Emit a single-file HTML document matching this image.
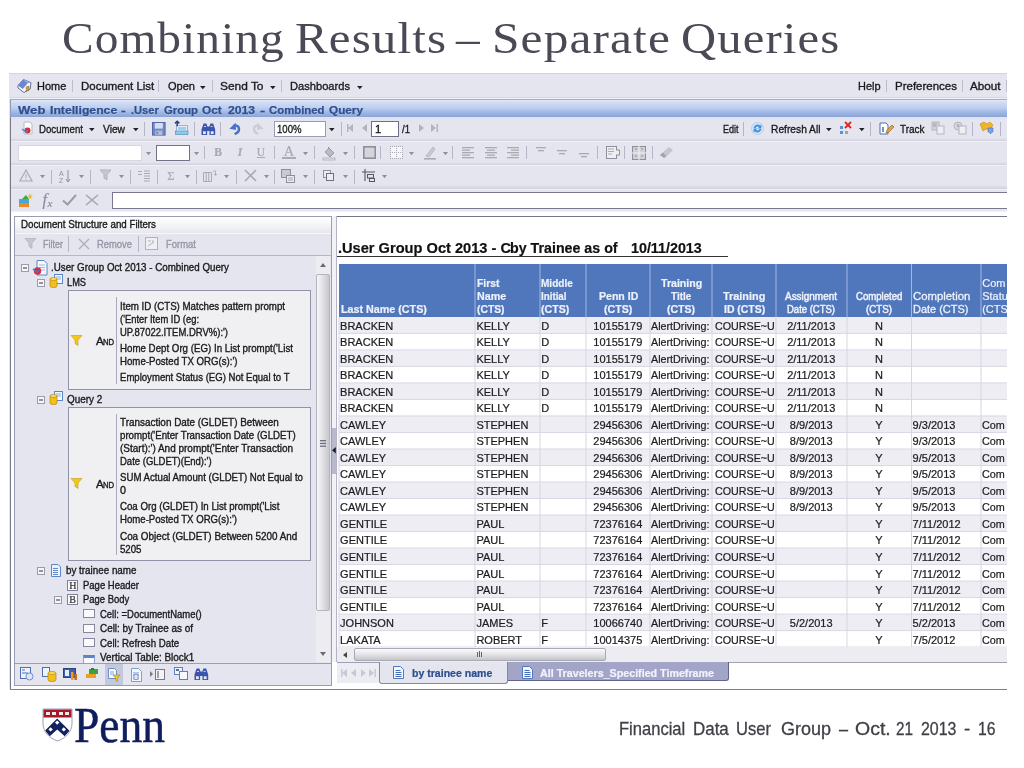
<!DOCTYPE html>
<html>
<head>
<meta charset="utf-8">
<title>Combining Results - Separate Queries</title>
<style>
*{box-sizing:border-box;margin:0;padding:0}
html,body{width:1024px;height:768px;overflow:hidden;background:#fff}
body{position:relative;font-family:"Liberation Sans",sans-serif}
.a{position:absolute}
.t{position:absolute;white-space:nowrap;line-height:normal;-webkit-text-stroke:.22px}
#slide{position:absolute;left:0;top:0;width:1024px;height:768px;overflow:hidden;will-change:transform}
svg{position:absolute;overflow:visible}
</style>
</head>
<body>
<div id="slide">
<span class="t" style="left:61.80px;top:13.10px;font-size:44px;color:#4a4a56;font-family:'Liberation Serif',serif;letter-spacing:1.0px;transform-origin:0 39.20px;transform:scale(1.0757,1);-webkit-text-stroke:0;">Combining</span>
<span class="t" style="left:295.20px;top:13.10px;font-size:44px;color:#4a4a56;font-family:'Liberation Serif',serif;letter-spacing:1.0px;transform-origin:0 39.20px;transform:scale(1.1136,1);-webkit-text-stroke:0;">Results</span>
<span class="t" style="left:456.40px;top:13.10px;font-size:44px;color:#4a4a56;font-family:'Liberation Serif',serif;letter-spacing:1.0px;transform-origin:0 39.20px;transform:scale(1.0783,1);-webkit-text-stroke:0;">–</span>
<span class="t" style="left:491.80px;top:13.10px;font-size:44px;color:#4a4a56;font-family:'Liberation Serif',serif;letter-spacing:1.0px;transform-origin:0 39.20px;transform:scale(1.1225,1);-webkit-text-stroke:0;">Separate</span>
<span class="t" style="left:681.20px;top:13.10px;font-size:44px;color:#4a4a56;font-family:'Liberation Serif',serif;letter-spacing:1.0px;transform-origin:0 39.20px;transform:scale(1.1068,1);-webkit-text-stroke:0;">Queries</span>
<div class="a" style="left:9px;top:73px;width:998px;height:616px;background:#e4e5ee;"></div>
<span class="t" style="left:618.75px;top:719.49px;font-size:17.8px;color:#3f3f46;transform-origin:0 16.11px;transform:scale(0.9308,1);-webkit-text-stroke:.3px;">Financial</span>
<span class="t" style="left:693.00px;top:719.49px;font-size:17.8px;color:#3f3f46;transform-origin:0 16.11px;transform:scale(0.9517,1);-webkit-text-stroke:.3px;">Data</span>
<span class="t" style="left:736.25px;top:719.49px;font-size:17.8px;color:#3f3f46;transform-origin:0 16.11px;transform:scale(0.9322,1);-webkit-text-stroke:.3px;">User</span>
<span class="t" style="left:781.20px;top:719.49px;font-size:17.8px;color:#3f3f46;transform-origin:0 16.11px;transform:scale(1.0117,1);-webkit-text-stroke:.3px;">Group</span>
<span class="t" style="left:838.75px;top:719.49px;font-size:17.8px;color:#3f3f46;transform-origin:0 16.11px;transform:scale(0.9150,1);-webkit-text-stroke:.3px;">–</span>
<span class="t" style="left:854.80px;top:719.49px;font-size:17.8px;color:#3f3f46;transform-origin:0 16.11px;transform:scale(1.0948,1);-webkit-text-stroke:.3px;">Oct.</span>
<span class="t" style="left:895.50px;top:719.49px;font-size:17.8px;color:#3f3f46;transform-origin:0 16.11px;transform:scale(0.8594,1);-webkit-text-stroke:.3px;">21</span>
<span class="t" style="left:920.50px;top:719.49px;font-size:17.8px;color:#3f3f46;transform-origin:0 16.11px;transform:scale(0.8973,1);-webkit-text-stroke:.3px;">2013</span>
<span class="t" style="left:964.25px;top:719.49px;font-size:17.8px;color:#3f3f46;transform-origin:0 16.11px;transform:scale(1.0554,1);-webkit-text-stroke:.3px;">-</span>
<span class="t" style="left:978.00px;top:719.49px;font-size:17.8px;color:#3f3f46;transform-origin:0 16.11px;transform:scale(0.8847,1);-webkit-text-stroke:.3px;">16</span>
<span class="t" style="left:74.00px;top:697.01px;font-size:49.6px;color:#0f1d5c;font-family:'Liberation Serif',serif;transform-origin:0 44.19px;transform:scale(0.9175,1);-webkit-text-stroke:.5px #0f1d5c;">Penn</span>
<svg class="a" style="left:42px;top:708px" width="31" height="34" viewBox="0 0 31 34">
<path d="M1 1h29v14c0 9-6 15-14.5 18C7 30 1 24 1 15z" fill="#fff" stroke="#9aa0b8" stroke-width="1"/>
<rect x="1.5" y="1.5" width="28" height="8" fill="#a5182a"/>
<path d="M4 4h4v3H4zM10 4h4v3h-4zM17 4h4v3h-4zM23 4h4v3h-4z" fill="#f3e9ea"/>
<clipPath id="shc"><path d="M1.5 1.5h28v13.5c0 8.7-5.8 14.5-14 17.4C7.3 29.5 1.5 23.7 1.5 15z"/></clipPath><path clip-path="url(#shc)" d="M15.2 10.5L27.5 22.8 22.7 28.3 15.2 21.4 7.7 28.3 2.9 22.8z" fill="#13215f"/>
<path d="M15.2 12.4l2.2 2.2-2.2 2.2-2.2-2.2zM8.6 19.2l2.2 2.2-2.2 2.2-2.2-2.2zM21.8 19.2l2.2 2.2-2.2 2.2-2.2-2.2z" fill="#fff"/>
</svg>
<div class="a" style="left:9px;top:73px;width:998px;height:1px;background:#d3d4dd;"></div>
<div class="a" style="left:9px;top:96.6px;width:998px;height:1.2px;background:#d9d9e2;"></div>
<div class="a" style="left:9px;top:97.8px;width:998px;height:1.5px;background:#f0f0f7;"></div>
<svg class="a" style="left:16.50px;top:77.80px" width="15" height="15" viewBox="0 0 15 15"><path d="M1 7.5L6.5 1.5l7.5 3.2-.8 6.3L7 14.5 1 10z" fill="#f7f7fb" stroke="#59638c" stroke-width=".9"/><path d="M1 7.5L6.5 1.5l4.2 3.8L5.8 11z" fill="#6a86d8"/><path d="M6.5 1.5l4.2 3.8 3.3-.6z" fill="#8ea4e6"/><path d="M9.2 9l2.8-1v4.2l-2.8 1.2z" fill="#c8a040" stroke="#7a6020" stroke-width=".5"/></svg>
<span class="t" style="left:36.75px;top:79.68px;font-size:11.4px;color:#1a1a1e;transform-origin:0 10.32px;transform:scale(0.9625,1);-webkit-text-stroke:.34px;">Home</span>
<span class="t" style="left:80.50px;top:79.68px;font-size:11.4px;color:#1a1a1e;transform-origin:0 10.32px;transform:scale(1.0060,1);-webkit-text-stroke:.34px;">Document List</span>
<span class="t" style="left:167.50px;top:79.68px;font-size:11.4px;color:#1a1a1e;transform-origin:0 10.32px;transform:scale(0.9686,1);-webkit-text-stroke:.34px;">Open</span>
<span class="t" style="left:220.00px;top:79.68px;font-size:11.4px;color:#1a1a1e;transform-origin:0 10.32px;transform:scale(1.0458,1);-webkit-text-stroke:.34px;">Send To</span>
<span class="t" style="left:290.00px;top:79.68px;font-size:11.4px;color:#1a1a1e;transform-origin:0 10.32px;transform:scale(0.9769,1);-webkit-text-stroke:.34px;">Dashboards</span>
<span class="t" style="left:858.00px;top:79.68px;font-size:11.4px;color:#1a1a1e;transform-origin:0 10.32px;transform:scale(0.9600,1);-webkit-text-stroke:.34px;">Help</span>
<span class="t" style="left:894.50px;top:79.68px;font-size:11.4px;color:#1a1a1e;transform-origin:0 10.32px;transform:scale(1.0094,1);-webkit-text-stroke:.34px;">Preferences</span>
<span class="t" style="left:970.00px;top:79.68px;font-size:11.4px;color:#1a1a1e;transform-origin:0 10.32px;transform:scale(1.0241,1);-webkit-text-stroke:.34px;">About</span>
<div class="a" style="left:72px;top:80px;width:1px;height:12px;background:#bdbecc;"></div>
<div class="a" style="left:158px;top:80px;width:1px;height:12px;background:#bdbecc;"></div>
<div class="a" style="left:212px;top:80px;width:1px;height:12px;background:#bdbecc;"></div>
<div class="a" style="left:281px;top:80px;width:1px;height:12px;background:#bdbecc;"></div>
<div class="a" style="left:886px;top:80px;width:1px;height:12px;background:#bdbecc;"></div>
<div class="a" style="left:962px;top:80px;width:1px;height:12px;background:#bdbecc;"></div>
<div class="a" style="left:1006px;top:80px;width:1px;height:12px;background:#bdbecc;"></div>
<svg class="a" style="left:200.20px;top:85.50px" width="5.6" height="3.2" viewBox="0 0 5.6 3.2"><path d="M0 0h5.6L2.8 3.2z" fill="#222"/></svg>
<svg class="a" style="left:269.70px;top:85.50px" width="5.6" height="3.2" viewBox="0 0 5.6 3.2"><path d="M0 0h5.6L2.8 3.2z" fill="#222"/></svg>
<svg class="a" style="left:356.70px;top:85.50px" width="5.6" height="3.2" viewBox="0 0 5.6 3.2"><path d="M0 0h5.6L2.8 3.2z" fill="#222"/></svg>
<div class="a" style="left:10px;top:99px;width:1px;height:19px;background:#8d97b8;"></div>
<div class="a" style="left:9.8px;top:118px;width:1.4px;height:572px;background:#777889;"></div>
<div class="a" style="left:10px;top:99.3px;width:997px;height:18.2px;border-top:1.6px solid #a9aabb;border-left:1px solid #8d97b8;background:linear-gradient(#e2e8f9 0%,#d2ddf5 12%,#bfcfef 45%,#99b3e3 78%,#8fa9db 94%,#8a9cc6 100%);"></div>
<div class="a" style="left:11px;top:117.5px;width:996px;height:1.1px;background:#dde2f2;"></div>
<span class="t" style="left:17.80px;top:102.70px;font-size:11.6px;color:#2f4f8f;font-weight:bold;transform-origin:0 10.50px;transform:scale(1.1292,1);-webkit-text-stroke:.25px;text-shadow:0 1px 0 rgba(255,255,255,.3);">Web</span>
<span class="t" style="left:49.60px;top:102.70px;font-size:11.6px;color:#2f4f8f;font-weight:bold;transform-origin:0 10.50px;transform:scale(1.0533,1);-webkit-text-stroke:.25px;text-shadow:0 1px 0 rgba(255,255,255,.3);">Intelligence</span>
<span class="t" style="left:121.30px;top:102.70px;font-size:11.6px;color:#2f4f8f;font-weight:bold;transform-origin:0 10.50px;transform:scale(1.2129,1);-webkit-text-stroke:.25px;text-shadow:0 1px 0 rgba(255,255,255,.3);">-</span>
<span class="t" style="left:130.60px;top:102.70px;font-size:11.6px;color:#2f4f8f;font-weight:bold;transform-origin:0 10.50px;transform:scale(0.9581,1);-webkit-text-stroke:.25px;text-shadow:0 1px 0 rgba(255,255,255,.3);">.User</span>
<span class="t" style="left:163.90px;top:102.70px;font-size:11.6px;color:#2f4f8f;font-weight:bold;transform-origin:0 10.50px;transform:scale(0.9775,1);-webkit-text-stroke:.25px;text-shadow:0 1px 0 rgba(255,255,255,.3);">Group</span>
<span class="t" style="left:202.10px;top:102.70px;font-size:11.6px;color:#2f4f8f;font-weight:bold;transform-origin:0 10.50px;transform:scale(1.0192,1);-webkit-text-stroke:.25px;text-shadow:0 1px 0 rgba(255,255,255,.3);">Oct</span>
<span class="t" style="left:227.50px;top:102.70px;font-size:11.6px;color:#2f4f8f;font-weight:bold;transform-origin:0 10.50px;transform:scale(1.0505,1);-webkit-text-stroke:.25px;text-shadow:0 1px 0 rgba(255,255,255,.3);">2013</span>
<span class="t" style="left:259.60px;top:102.70px;font-size:11.6px;color:#2f4f8f;font-weight:bold;transform-origin:0 10.50px;transform:scale(1.3419,1);-webkit-text-stroke:.25px;text-shadow:0 1px 0 rgba(255,255,255,.3);">-</span>
<span class="t" style="left:268.50px;top:102.70px;font-size:11.6px;color:#2f4f8f;font-weight:bold;transform-origin:0 10.50px;transform:scale(0.9791,1);-webkit-text-stroke:.25px;text-shadow:0 1px 0 rgba(255,255,255,.3);">Combined</span>
<span class="t" style="left:329.00px;top:102.70px;font-size:11.6px;color:#2f4f8f;font-weight:bold;transform-origin:0 10.50px;transform:scale(1.0145,1);-webkit-text-stroke:.25px;text-shadow:0 1px 0 rgba(255,255,255,.3);">Query</span>
<div class="a" style="left:11px;top:137.6px;width:996px;height:3.3px;background:linear-gradient(rgba(209,210,220,0),#d0d1db);"></div>
<div class="a" style="left:11px;top:141.0px;width:996px;height:1.3px;background:#f0f0f7;"></div>
<div class="a" style="left:11px;top:161.5px;width:996px;height:3.3px;background:linear-gradient(rgba(209,210,220,0),#d0d1db);"></div>
<div class="a" style="left:11px;top:164.9px;width:996px;height:1.3px;background:#f0f0f7;"></div>
<div class="a" style="left:11px;top:185.4px;width:996px;height:3.3px;background:linear-gradient(rgba(209,210,220,0),#d0d1db);"></div>
<div class="a" style="left:11px;top:188.8px;width:996px;height:1.3px;background:#f0f0f7;"></div>
<svg class="a" style="left:21.00px;top:120.90px" width="12" height="15" viewBox="0 0 12 15"><path d="M3 1h6l2 2v10H3z" fill="#fbfbfd" stroke="#b9b9c8"/><circle cx="6.5" cy="9.5" r="3" fill="#e32636"/><path d="M1 8l4 3 2-2" stroke="#3a8fd6" stroke-width="1.5" fill="none"/></svg>
<span class="t" style="left:39.00px;top:122.68px;font-size:11.4px;color:#1a1a1e;transform-origin:0 10.32px;transform:scale(0.8474,1);-webkit-text-stroke:.34px;">Document</span>
<svg class="a" style="left:88.70px;top:127.90px" width="5.6" height="3.2" viewBox="0 0 5.6 3.2"><path d="M0 0h5.6L2.8 3.2z" fill="#222"/></svg>
<span class="t" style="left:103.00px;top:122.68px;font-size:11.4px;color:#1a1a1e;transform-origin:0 10.32px;transform:scale(0.8985,1);-webkit-text-stroke:.34px;">View</span>
<svg class="a" style="left:132.70px;top:127.90px" width="5.6" height="3.2" viewBox="0 0 5.6 3.2"><path d="M0 0h5.6L2.8 3.2z" fill="#222"/></svg>
<div class="a" style="left:144px;top:122px;width:1px;height:14px;background:#b4b5c6;"></div>
<svg class="a" style="left:151.90px;top:121.60px" width="13.6" height="13.6" viewBox="0 0 13.6 13.6"><rect x=".5" y=".5" width="12.6" height="12.6" fill="#7289c4" stroke="#5068a8"/><rect x="2.8" y="1" width="8" height="5.6" fill="#d6dff1"/><rect x="3.3" y="8.6" width="7" height="4.4" fill="#b1bedb"/><rect x="4.3" y="9.6" width="2" height="2.6" fill="#7289c4"/></svg>
<svg class="a" style="left:174.00px;top:120.40px" width="15" height="16" viewBox="0 0 15 16"><rect x="2.5" y="5.5" width="11" height="8" fill="#e4eef9" stroke="#8aa6d0" stroke-width=".8"/><rect x="4" y="7" width="8" height="3" fill="#9fd0e6"/><rect x="1.5" y="11" width="12.5" height="3.6" fill="#8ccbe6" stroke="#5f8fc0" stroke-width=".7"/><path d="M3.2 1.2v5M1 3.4l2.2-2.2 2.2 2.2" stroke="#27408a" fill="none" stroke-width="1.5"/></svg>
<div class="a" style="left:194px;top:122px;width:1px;height:14px;background:#b4b5c6;"></div>
<svg class="a" style="left:200.70px;top:121.80px" width="14.6" height="13.2" viewBox="0 0 14.6 13.2"><path d="M.5 13V7.5L2.6 1.5h2.8l1 3h2l1-3h2.8l2 6V13H8.5V9h-2.4v4z" fill="#3b55ae"/><rect x="2" y="9.3" width="2.8" height="2.8" fill="#e6ebfb"/><rect x="9.8" y="9.3" width="2.8" height="2.8" fill="#e6ebfb"/><path d="M3 4.5h2M9.6 4.5h2" stroke="#c5cff0" stroke-width="1.2"/></svg>
<div class="a" style="left:220px;top:122px;width:1px;height:14px;background:#b4b5c6;"></div>
<svg class="a" style="left:229.00px;top:122.40px" width="12" height="12" viewBox="0 0 12 12"><path d="M6.5 11.6C11.5 9.5 11 2.8 5.5 3.6" fill="none" stroke="#4a72c8" stroke-width="2.5" stroke-linecap="round"/><path d="M.4 6.8L6.6 .8L7 8z" fill="#4a72c8"/></svg>
<svg class="a" style="left:251.50px;top:122.40px" width="12" height="12" viewBox="0 0 12 12"><path d="M5.5 11.6C.5 9.5 1 2.8 6.5 3.6" fill="none" stroke="#cbccd6" stroke-width="2.2" stroke-linecap="round"/><path d="M11.6 6.8L5.4 .8L5 8z" fill="#cbccd6"/></svg>
<div class="a" style="left:274px;top:121px;width:52px;height:16px;background:#fff;border:1px solid #9a9bb0;"></div>
<span class="t" style="left:276.50px;top:122.68px;font-size:11.4px;color:#1a1a1e;transform-origin:0 10.32px;transform:scale(0.8408,1);-webkit-text-stroke:.34px;">100%</span>
<svg class="a" style="left:329.20px;top:127.90px" width="5.6" height="3.2" viewBox="0 0 5.6 3.2"><path d="M0 0h5.6L2.8 3.2z" fill="#222"/></svg>
<div class="a" style="left:341px;top:122px;width:1px;height:14px;background:#b4b5c6;"></div>
<svg class="a" style="left:346.00px;top:123.40px" width="8" height="10" viewBox="0 0 8 10"><path d="M7 1v8L2 5zM1 1h1.5v8H1z" fill="#b3b4c0"/></svg>
<svg class="a" style="left:361.00px;top:123.40px" width="8" height="10" viewBox="0 0 8 10"><path d="M6 1v8L1 5z" fill="#b3b4c0"/></svg>
<div class="a" style="left:371px;top:121px;width:27.5px;height:16px;background:#fff;border:1px solid #6f7088;"></div>
<span class="t" style="left:375.00px;top:122.68px;font-size:11.4px;color:#1a1a1e;-webkit-text-stroke:.34px;">1</span>
<span class="t" style="left:402.00px;top:122.68px;font-size:11.4px;color:#1a1a1e;transform-origin:0 10.32px;transform:scale(0.8421,1);-webkit-text-stroke:.34px;">/1</span>
<svg class="a" style="left:417.00px;top:123.40px" width="8" height="10" viewBox="0 0 8 10"><path d="M2 1v8l5-4z" fill="#b3b4c0"/></svg>
<svg class="a" style="left:430.00px;top:123.40px" width="8" height="10" viewBox="0 0 8 10"><path d="M1 1v8l5-4zM6.5 1H8v8H6.5z" fill="#b3b4c0"/></svg>
<span class="t" style="left:722.50px;top:122.68px;font-size:11.4px;color:#1a1a1e;transform-origin:0 10.32px;transform:scale(0.7892,1);-webkit-text-stroke:.34px;">Edit</span>
<div class="a" style="left:743px;top:122px;width:1px;height:14px;background:#b4b5c6;"></div>
<svg class="a" style="left:751.00px;top:121.90px" width="13" height="13" viewBox="0 0 13 13"><circle cx="6.5" cy="6.5" r="6" fill="#d3e6f8" stroke="#a8caee" stroke-width=".8"/><path d="M2.6 6a4 4 0 0 1 6.6-2.4l1.2-1v3.8H6.6l1.4-1.4A2.4 2.4 0 0 0 4.4 6z" fill="#4a90d9"/><path d="M10.4 7a4 4 0 0 1-6.6 2.4l-1.2 1V6.6h3.8L5 8A2.4 2.4 0 0 0 8.6 7z" fill="#4a90d9"/></svg>
<span class="t" style="left:771.00px;top:122.68px;font-size:11.4px;color:#1a1a1e;transform-origin:0 10.32px;transform:scale(0.8985,1);-webkit-text-stroke:.34px;">Refresh All</span>
<svg class="a" style="left:825.70px;top:127.90px" width="5.6" height="3.2" viewBox="0 0 5.6 3.2"><path d="M0 0h5.6L2.8 3.2z" fill="#222"/></svg>
<svg class="a" style="left:839.00px;top:121.40px" width="14" height="14" viewBox="0 0 14 14"><rect x="1" y="5" width="3" height="3" fill="#5b8fd8"/><rect x="1" y="10" width="3" height="3" fill="#5b8fd8"/><rect x="6" y="10" width="3" height="3" fill="#7fb5a8"/><path d="M6 1l6 6M12 1L6 7" stroke="#e02424" stroke-width="1.8"/></svg>
<svg class="a" style="left:859.20px;top:127.90px" width="5.6" height="3.2" viewBox="0 0 5.6 3.2"><path d="M0 0h5.6L2.8 3.2z" fill="#222"/></svg>
<div class="a" style="left:870px;top:122px;width:1px;height:14px;background:#b4b5c6;"></div>
<svg class="a" style="left:879.00px;top:121.40px" width="15" height="14" viewBox="0 0 15 14"><path d="M1 2h6l2 2v9H1z" fill="#fff" stroke="#4d6fb8"/><path d="M4 6v5" stroke="#4d6fb8" stroke-width="1.5"/><path d="M7 12l1-3 5-5 2 2-5 5z" fill="#e0a33a" stroke="#8a5a20" stroke-width=".6"/></svg>
<span class="t" style="left:899.50px;top:122.68px;font-size:11.4px;color:#1a1a1e;transform-origin:0 10.32px;transform:scale(0.8731,1);-webkit-text-stroke:.34px;">Track</span>
<svg class="a" style="left:931.00px;top:121.40px" width="14" height="14" viewBox="0 0 14 14"><rect x="1" y="1" width="7" height="8" fill="#d2d3db" stroke="#b4b5c0"/><rect x="6" y="5" width="7" height="8" fill="#eeeef3" stroke="#b4b5c0"/><path d="M2 3h4M2 5h3" stroke="#9d9eaa"/></svg>
<svg class="a" style="left:953.00px;top:121.40px" width="14" height="14" viewBox="0 0 14 14"><circle cx="5" cy="5" r="4" fill="#d5d6de" stroke="#b4b5c0"/><rect x="6" y="5" width="7" height="8" fill="#eeeef3" stroke="#b4b5c0"/><path d="M5 3v3" stroke="#8f909c"/></svg>
<div class="a" style="left:972px;top:122px;width:1px;height:14px;background:#b4b5c6;"></div>
<svg class="a" style="left:979.00px;top:121.40px" width="15" height="14" viewBox="0 0 15 14"><path d="M1 3l4-2 3 2 3-2 3 3-3 5-4-1-3 2z" fill="#f0b429" stroke="#c48a12" stroke-width=".6"/><path d="M9 7h5v4h-2v2l-2-2H9z" fill="#7ea4e6" stroke="#4d6fb8" stroke-width=".6"/></svg>
<div class="a" style="left:1000px;top:122px;width:1px;height:14px;background:#b4b5c6;"></div>
<div class="a" style="left:17.5px;top:144.5px;width:124.5px;height:16px;background:#fff;border:1px solid #d6d7e2;"></div>
<svg class="a" style="left:145.50px;top:152.00px" width="5" height="3.2" viewBox="0 0 5 3.2"><path d="M0 0h5L2.5 3.2z" fill="#8e8f9a"/></svg>
<div class="a" style="left:156px;top:144.5px;width:33.5px;height:16px;background:#fff;border:1px solid #70718a;"></div>
<svg class="a" style="left:193.50px;top:152.00px" width="5" height="3.2" viewBox="0 0 5 3.2"><path d="M0 0h5L2.5 3.2z" fill="#8e8f9a"/></svg>
<div class="a" style="left:204px;top:145.5px;width:1px;height:13.5px;background:#b4b5c6;"></div>
<div class="a" style="left:274px;top:145.5px;width:1px;height:13.5px;background:#b4b5c6;"></div>
<div class="a" style="left:314px;top:145.5px;width:1px;height:13.5px;background:#b4b5c6;"></div>
<div class="a" style="left:354px;top:145.5px;width:1px;height:13.5px;background:#b4b5c6;"></div>
<div class="a" style="left:380px;top:145.5px;width:1px;height:13.5px;background:#b4b5c6;"></div>
<div class="a" style="left:452px;top:145.5px;width:1px;height:13.5px;background:#b4b5c6;"></div>
<div class="a" style="left:526px;top:145.5px;width:1px;height:13.5px;background:#b4b5c6;"></div>
<div class="a" style="left:597px;top:145.5px;width:1px;height:13.5px;background:#b4b5c6;"></div>
<div class="a" style="left:624px;top:145.5px;width:1px;height:13.5px;background:#b4b5c6;"></div>
<div class="a" style="left:652px;top:145.5px;width:1px;height:13.5px;background:#b4b5c6;"></div>
<span class="t" style="left:212px;width:12px;text-align:center;top:145.95px;font-family:'Liberation Serif',serif;font-size:11.5px;color:#a9aab4;font-weight:bold;">B</span>
<span class="t" style="left:234px;width:12px;text-align:center;top:145.95px;font-family:'Liberation Serif',serif;font-size:11.5px;color:#a9aab4;font-style:italic;font-weight:bold;">I</span>
<span class="t" style="left:255px;width:12px;text-align:center;top:145.95px;font-family:'Liberation Serif',serif;font-size:11.5px;color:#a9aab4;text-decoration:underline;">U</span>
<span class="t" style="left:283px;width:12px;text-align:center;top:142.88px;font-family:'Liberation Serif',serif;font-size:14.5px;color:#a9aab4;">A</span>
<div class="a" style="left:282px;top:156.6px;width:14px;height:2.4px;border:1px solid #a9aab4;"></div>
<svg class="a" style="left:302.50px;top:152.00px" width="5" height="3.2" viewBox="0 0 5 3.2"><path d="M0 0h5L2.5 3.2z" fill="#8e8f9a"/></svg>
<svg class="a" style="left:321.50px;top:145.50px" width="14" height="14" viewBox="0 0 14 14"><path d="M3 6l4-4 5 5-4 4z" fill="#b9bac4" stroke="#8e8f9a" stroke-width=".8"/><path d="M6 1l3 3" stroke="#8e8f9a"/><rect x="1" y="12" width="12" height="2" fill="none" stroke="#a9aab4" stroke-width=".8"/></svg>
<svg class="a" style="left:342.50px;top:152.00px" width="5" height="3.2" viewBox="0 0 5 3.2"><path d="M0 0h5L2.5 3.2z" fill="#8e8f9a"/></svg>
<svg class="a" style="left:362.50px;top:146.00px" width="13" height="13" viewBox="0 0 13 13"><rect x="0.8" y="0.8" width="11.4" height="11.4" fill="#d4d5dc" stroke="#8e8f9a" stroke-width="1.6"/></svg>
<svg class="a" style="left:389.50px;top:146.00px" width="13" height="13" viewBox="0 0 13 13"><rect x="1" y="1" width="11" height="11" fill="#f6f6fa"/><path d="M0 .5h13M0 6.5h13M0 12.5h13M.5 0v13M6.5 0v13M12.5 0v13" stroke="#a9aab4" stroke-dasharray="1 1"/></svg>
<svg class="a" style="left:408.50px;top:152.00px" width="5" height="3.2" viewBox="0 0 5 3.2"><path d="M0 0h5L2.5 3.2z" fill="#8e8f9a"/></svg>
<svg class="a" style="left:423.00px;top:145.50px" width="14" height="14" viewBox="0 0 14 14"><path d="M3 10l7-9 2 2-6 8z" fill="#c9cad2" stroke="#a9aab4" stroke-width=".7"/><rect x="1" y="12" width="12" height="1.6" fill="#a9aab4"/></svg>
<svg class="a" style="left:442.50px;top:152.00px" width="5" height="3.2" viewBox="0 0 5 3.2"><path d="M0 0h5L2.5 3.2z" fill="#8e8f9a"/></svg>
<svg class="a" style="left:462.00px;top:146.90px" width="12" height="12.5" viewBox="0 0 12 12.5"><rect x="0" y="0.0" width="12" height="1.3" fill="#a9aab4"/><rect x="0" y="2.5" width="8" height="1.3" fill="#a9aab4"/><rect x="0" y="5.0" width="12" height="1.3" fill="#a9aab4"/><rect x="0" y="7.5" width="8" height="1.3" fill="#a9aab4"/><rect x="0" y="10.0" width="12" height="1.3" fill="#a9aab4"/></svg>
<svg class="a" style="left:484.60px;top:146.90px" width="12" height="12.5" viewBox="0 0 12 12.5"><rect x="0.0" y="0.0" width="12" height="1.3" fill="#a9aab4"/><rect x="2.0" y="2.5" width="8" height="1.3" fill="#a9aab4"/><rect x="0.0" y="5.0" width="12" height="1.3" fill="#a9aab4"/><rect x="2.0" y="7.5" width="8" height="1.3" fill="#a9aab4"/><rect x="0.0" y="10.0" width="12" height="1.3" fill="#a9aab4"/></svg>
<svg class="a" style="left:507.00px;top:146.90px" width="12" height="12.5" viewBox="0 0 12 12.5"><rect x="0" y="0.0" width="12" height="1.3" fill="#a9aab4"/><rect x="4" y="2.5" width="8" height="1.3" fill="#a9aab4"/><rect x="0" y="5.0" width="12" height="1.3" fill="#a9aab4"/><rect x="4" y="7.5" width="8" height="1.3" fill="#a9aab4"/><rect x="0" y="10.0" width="12" height="1.3" fill="#a9aab4"/></svg>
<svg class="a" style="left:535.70px;top:147.40px" width="10" height="6" viewBox="0 0 10 6"><rect x="0.0" y="0" width="10" height="1.3" fill="#a9aab4"/><rect x="2.0" y="3" width="6" height="1.3" fill="#a9aab4"/></svg>
<svg class="a" style="left:557.40px;top:150.40px" width="10" height="6" viewBox="0 0 10 6"><rect x="0.0" y="0" width="10" height="1.3" fill="#a9aab4"/><rect x="2.0" y="3" width="6" height="1.3" fill="#a9aab4"/></svg>
<svg class="a" style="left:579.00px;top:153.40px" width="10" height="6" viewBox="0 0 10 6"><rect x="0.0" y="0" width="10" height="1.3" fill="#a9aab4"/><rect x="2.0" y="3" width="6" height="1.3" fill="#a9aab4"/></svg>
<svg class="a" style="left:605.50px;top:146.00px" width="14" height="13" viewBox="0 0 14 13"><rect x=".5" y=".5" width="10" height="12" fill="#eeeef3" stroke="#8e8f9a"/><path d="M2 3h6M2 5.5h6M2 8h4" stroke="#a9aab4"/><path d="M10 4h3.5v5H10" fill="#eeeef3" stroke="#8e8f9a"/></svg>
<svg class="a" style="left:632.00px;top:145.50px" width="14" height="14" viewBox="0 0 14 14"><rect x=".5" y=".5" width="13" height="13" fill="#cfd0d8" stroke="#8e8f9a"/><path d="M7 0v14M0 7h14" stroke="#f1f1f5"/><path d="M3 3h2M9 3h2M3 10h2M9 10h2" stroke="#8e8f9a"/></svg>
<svg class="a" style="left:659.00px;top:146.00px" width="15" height="13" viewBox="0 0 15 13"><path d="M1 9l9-8 4 3-8 8z" fill="#c4c5ce"/><path d="M1 9l3-2.5 3 3.5-2 2z" fill="#a2a3ae"/></svg>
<div class="a" style="left:51px;top:169.8px;width:1px;height:14.199999999999989px;background:#b4b5c6;"></div>
<div class="a" style="left:90px;top:169.8px;width:1px;height:14.199999999999989px;background:#b4b5c6;"></div>
<div class="a" style="left:130px;top:169.8px;width:1px;height:14.199999999999989px;background:#b4b5c6;"></div>
<div class="a" style="left:157px;top:169.8px;width:1px;height:14.199999999999989px;background:#b4b5c6;"></div>
<div class="a" style="left:196px;top:169.8px;width:1px;height:14.199999999999989px;background:#b4b5c6;"></div>
<div class="a" style="left:236px;top:169.8px;width:1px;height:14.199999999999989px;background:#b4b5c6;"></div>
<div class="a" style="left:274px;top:169.8px;width:1px;height:14.199999999999989px;background:#b4b5c6;"></div>
<div class="a" style="left:314px;top:169.8px;width:1px;height:14.199999999999989px;background:#b4b5c6;"></div>
<div class="a" style="left:354px;top:169.8px;width:1px;height:14.199999999999989px;background:#b4b5c6;"></div>
<svg class="a" style="left:40.00px;top:175.30px" width="5" height="3.2" viewBox="0 0 5 3.2"><path d="M0 0h5L2.5 3.2z" fill="#8e8f9a"/></svg>
<svg class="a" style="left:79.00px;top:175.30px" width="5" height="3.2" viewBox="0 0 5 3.2"><path d="M0 0h5L2.5 3.2z" fill="#8e8f9a"/></svg>
<svg class="a" style="left:118.50px;top:175.30px" width="5" height="3.2" viewBox="0 0 5 3.2"><path d="M0 0h5L2.5 3.2z" fill="#8e8f9a"/></svg>
<svg class="a" style="left:185.00px;top:175.30px" width="5" height="3.2" viewBox="0 0 5 3.2"><path d="M0 0h5L2.5 3.2z" fill="#8e8f9a"/></svg>
<svg class="a" style="left:224.00px;top:175.30px" width="5" height="3.2" viewBox="0 0 5 3.2"><path d="M0 0h5L2.5 3.2z" fill="#8e8f9a"/></svg>
<svg class="a" style="left:263.50px;top:175.30px" width="5" height="3.2" viewBox="0 0 5 3.2"><path d="M0 0h5L2.5 3.2z" fill="#8e8f9a"/></svg>
<svg class="a" style="left:302.50px;top:175.30px" width="5" height="3.2" viewBox="0 0 5 3.2"><path d="M0 0h5L2.5 3.2z" fill="#8e8f9a"/></svg>
<svg class="a" style="left:342.50px;top:175.30px" width="5" height="3.2" viewBox="0 0 5 3.2"><path d="M0 0h5L2.5 3.2z" fill="#8e8f9a"/></svg>
<svg class="a" style="left:381.50px;top:175.30px" width="5" height="3.2" viewBox="0 0 5 3.2"><path d="M0 0h5L2.5 3.2z" fill="#8e8f9a"/></svg>
<svg class="a" style="left:18.50px;top:169.30px" width="14" height="13" viewBox="0 0 14 13"><path d="M7 1l6 11H1z" fill="none" stroke="#a9aab4" stroke-width="1.2"/><path d="M7 5v4M7 10v1" stroke="#a9aab4"/></svg>
<svg class="a" style="left:59.00px;top:168.80px" width="12" height="15" viewBox="0 0 12 15"><text x="0" y="6.5" font-size="7" font-family="Liberation Sans" fill="#8e8f9a">A</text><text x="0" y="14" font-size="7" font-family="Liberation Sans" fill="#8e8f9a">Z</text><path d="M9 1v12M7 10l2 3 2-3" stroke="#8e8f9a" fill="none"/></svg>
<svg class="a" style="left:99.50px;top:170.30px" width="11" height="11" viewBox="0 0 11 11"><path d="M0 0h11L7 4.5V10L4 8V4.5z" fill="#c6c7cf" stroke="#a9aab4" stroke-width=".8"/></svg>
<svg class="a" style="left:138.00px;top:170.00px" width="12" height="12" viewBox="0 0 12 12"><path d="M0 1.5h4M0 4.5h4" stroke="#a9aab4" stroke-width="1.2"/><path d="M6 1h6M6 3.5h6M6 6h6M6 8.5h6M6 11h6" stroke="#a9aab4" stroke-width="1.2"/></svg>
<span class="t" style="left:165px;width:12px;text-align:center;top:169.16px;font-family:'Liberation Serif',serif;font-size:12.5px;color:#a9aab4;">Σ</span>
<svg class="a" style="left:203.00px;top:170.00px" width="13" height="12" viewBox="0 0 13 12"><path d="M.5 2.5h8v9h-8zM3.2 2.5v9M5.8 2.5v9" fill="none" stroke="#a9aab4"/><path d="M10 1h2.5v4M11 4l1.5 1.5L14 4" fill="none" stroke="#a9aab4" stroke-width=".9"/></svg>
<svg class="a" style="left:243.50px;top:169.20px" width="13" height="13" viewBox="0 0 13 13"><path d="M1 1l11 11M12 1L1 12" stroke="#a9aab4" stroke-width="1.7"/></svg>
<svg class="a" style="left:281.00px;top:169.20px" width="14" height="14" viewBox="0 0 14 14"><rect x=".5" y=".5" width="9" height="8" fill="#c8c9d1" stroke="#8e8f9a"/><rect x="5.5" y="6.5" width="8" height="7" fill="#e9e9ee" stroke="#8e8f9a"/><path d="M7 9h5M7 11h5" stroke="#a9aab4"/></svg>
<svg class="a" style="left:323.00px;top:170.20px" width="12" height="12" viewBox="0 0 12 12"><rect x=".5" y=".5" width="7" height="7" fill="#ececf1" stroke="#8e8f9a"/><rect x="3.5" y="3.5" width="7" height="7" fill="#ececf1" stroke="#6f7080"/></svg>
<svg class="a" style="left:362.00px;top:168.80px" width="14" height="14" viewBox="0 0 14 14"><path d="M0 3h13M3 0v12" stroke="#55566a" stroke-width="1.1"/><rect x="5.5" y="5.5" width="6" height="3.5" fill="none" stroke="#55566a"/><rect x="7.5" y="9.5" width="5" height="3" fill="none" stroke="#55566a"/></svg>
<svg class="a" style="left:19.00px;top:192.50px" width="14" height="15" viewBox="0 0 14 15"><rect x="0" y="10" width="10" height="4" fill="#f08a24"/><rect x="0" y="6" width="10" height="4" fill="#4aa7dc"/><path d="M3 6l4-4 3 4z" fill="#3fa845"/><path d="M10 0l1 2 2-1-1 2 2 1-2 .5.5 2-1.5-1.5L10 6V4L8 3l2-.5z" fill="#f2c21a"/></svg>
<span class="t" style="left:42.50px;top:191.24px;font-size:16px;color:#8d8e9a;font-family:'Liberation Serif',serif;font-style:italic;">f</span>
<span class="t" style="left:47.50px;top:196.70px;font-size:11px;color:#8d8e9a;font-family:'Liberation Serif',serif;font-style:italic;">x</span>
<svg class="a" style="left:62.00px;top:194.00px" width="15" height="12" viewBox="0 0 15 12"><path d="M1 6.5l4.5 4L14 1" fill="none" stroke="#9b9ca8" stroke-width="2"/></svg>
<svg class="a" style="left:85.00px;top:194.00px" width="14" height="12" viewBox="0 0 14 12"><path d="M1 1l12 10M13 1L1 11" stroke="#a4a5b0" stroke-width="1.6"/></svg>
<div class="a" style="left:112px;top:191.8px;width:895px;height:17.2px;background:#fff;border:1px solid #787990;border-right:none;"></div>
<div class="a" style="left:11px;top:211.2px;width:996px;height:1px;background:#f1f1f6;"></div>
<div class="a" style="left:11px;top:212.2px;width:996px;height:476.8px;background:#ffffff;"></div>
<div class="a" style="left:10px;top:689px;width:997px;height:1px;background:#7d7e8c;"></div>
<div class="a" style="left:331.5px;top:216px;width:4.5px;height:446px;background:#f1f1f6;"></div>
<div class="a" style="left:332px;top:428px;width:4px;height:45.5px;background:#b9b9cc;"></div>
<svg class="a" style="left:332.00px;top:446.80px" width="3.8" height="6.4" viewBox="0 0 3.8 6.4"><path d="M3.8 0v6.4L0 3.2z" fill="#1c1c22"/></svg>
<div class="a" style="left:336px;top:216px;width:671px;height:1px;background:#75768a;"></div>
<div class="a" style="left:336px;top:216px;width:1px;height:446px;background:#b3b4c6;"></div>
<span class="t" style="left:337.60px;top:238.94px;font-size:15.2px;color:#111;font-weight:bold;transform-origin:0 13.76px;transform:scale(0.9623,1);">.User Group Oct 2013 - C</span>
<span class="t" style="left:509.80px;top:238.94px;font-size:15.2px;color:#111;font-weight:bold;transform-origin:0 13.76px;transform:scale(0.9373,1);">by Trainee as of</span>
<span class="t" style="left:631.25px;top:238.94px;font-size:15.2px;color:#111;font-weight:bold;transform-origin:0 13.76px;transform:scale(0.9410,1);">10/11/2013</span>
<div class="a" style="left:337px;top:256.2px;width:390.5px;height:1.1px;background:#333;"></div>
<svg class="a" style="left:339.00px;top:263.80px" width="668" height="383.2" viewBox="0 0 668 383.2"><rect x="0" y="0" width="668" height="53.00" fill="#5077bc"/><rect x="0" y="53.00" width="668" height="16.56" fill="#ededf3"/><rect x="0" y="69.51" width="668" height="16.56" fill="#ffffff"/><rect x="0" y="86.02" width="668" height="16.56" fill="#ededf3"/><rect x="0" y="102.53" width="668" height="16.56" fill="#ffffff"/><rect x="0" y="119.04" width="668" height="16.56" fill="#ededf3"/><rect x="0" y="135.55" width="668" height="16.56" fill="#ffffff"/><rect x="0" y="152.06" width="668" height="16.56" fill="#ededf3"/><rect x="0" y="168.57" width="668" height="16.56" fill="#ffffff"/><rect x="0" y="185.08" width="668" height="16.56" fill="#ededf3"/><rect x="0" y="201.59" width="668" height="16.56" fill="#ffffff"/><rect x="0" y="218.10" width="668" height="16.56" fill="#ededf3"/><rect x="0" y="234.61" width="668" height="16.56" fill="#ffffff"/><rect x="0" y="251.12" width="668" height="16.56" fill="#ededf3"/><rect x="0" y="267.63" width="668" height="16.56" fill="#ffffff"/><rect x="0" y="284.14" width="668" height="16.56" fill="#ededf3"/><rect x="0" y="300.65" width="668" height="16.56" fill="#ffffff"/><rect x="0" y="317.16" width="668" height="16.56" fill="#ededf3"/><rect x="0" y="333.67" width="668" height="16.56" fill="#ffffff"/><rect x="0" y="350.18" width="668" height="16.56" fill="#ededf3"/><rect x="0" y="366.69" width="668" height="16.56" fill="#ffffff"/><rect x="0" y="68.91" width="668" height="1" fill="#d7d8e5"/><rect x="0" y="85.42" width="668" height="1" fill="#d7d8e5"/><rect x="0" y="101.93" width="668" height="1" fill="#d7d8e5"/><rect x="0" y="118.44" width="668" height="1" fill="#d7d8e5"/><rect x="0" y="134.95" width="668" height="1" fill="#d7d8e5"/><rect x="0" y="151.46" width="668" height="1" fill="#d7d8e5"/><rect x="0" y="167.97" width="668" height="1" fill="#d7d8e5"/><rect x="0" y="184.48" width="668" height="1" fill="#d7d8e5"/><rect x="0" y="200.99" width="668" height="1" fill="#d7d8e5"/><rect x="0" y="217.50" width="668" height="1" fill="#d7d8e5"/><rect x="0" y="234.01" width="668" height="1" fill="#d7d8e5"/><rect x="0" y="250.52" width="668" height="1" fill="#d7d8e5"/><rect x="0" y="267.03" width="668" height="1" fill="#d7d8e5"/><rect x="0" y="283.54" width="668" height="1" fill="#d7d8e5"/><rect x="0" y="300.05" width="668" height="1" fill="#d7d8e5"/><rect x="0" y="316.56" width="668" height="1" fill="#d7d8e5"/><rect x="0" y="333.07" width="668" height="1" fill="#d7d8e5"/><rect x="0" y="349.58" width="668" height="1" fill="#d7d8e5"/><rect x="0" y="366.09" width="668" height="1" fill="#d7d8e5"/><rect x="0" y="382.60" width="668" height="1" fill="#d7d8e5"/><rect x="-0.5" y="53.00" width="1" height="330.20" fill="#d5d6e3"/><rect x="135.5" y="53.00" width="1" height="330.20" fill="#d5d6e3"/><rect x="200.5" y="53.00" width="1" height="330.20" fill="#d5d6e3"/><rect x="246.5" y="53.00" width="1" height="330.20" fill="#d5d6e3"/><rect x="310.5" y="53.00" width="1" height="330.20" fill="#d5d6e3"/><rect x="372.5" y="53.00" width="1" height="330.20" fill="#d5d6e3"/><rect x="436.5" y="53.00" width="1" height="330.20" fill="#d5d6e3"/><rect x="507.5" y="53.00" width="1" height="330.20" fill="#d5d6e3"/><rect x="572.0" y="53.00" width="1" height="330.20" fill="#d5d6e3"/><rect x="641.5" y="53.00" width="1" height="330.20" fill="#d5d6e3"/><rect x="135.5" y="0" width="1" height="53.00" fill="#a3b7e1"/><rect x="200.5" y="0" width="1" height="53.00" fill="#a3b7e1"/><rect x="246.5" y="0" width="1" height="53.00" fill="#a3b7e1"/><rect x="310.5" y="0" width="1" height="53.00" fill="#a3b7e1"/><rect x="372.5" y="0" width="1" height="53.00" fill="#a3b7e1"/><rect x="436.5" y="0" width="1" height="53.00" fill="#a3b7e1"/><rect x="507.5" y="0" width="1" height="53.00" fill="#a3b7e1"/><rect x="572.0" y="0" width="1" height="53.00" fill="#a3b7e1"/><rect x="641.5" y="0" width="1" height="53.00" fill="#a3b7e1"/></svg>
<span class="t" style="left:340.60px;top:303.05px;font-size:11px;color:#edf1fa;font-weight:bold;transform-origin:0 9.96px;transform:scale(0.9758,1);">Last Name (CTS)</span>
<span class="t" style="left:476.50px;top:277.05px;font-size:11px;color:#edf1fa;font-weight:bold;transform-origin:0 9.96px;transform:scale(0.9436,1);">First</span>
<span class="t" style="left:476.50px;top:290.05px;font-size:11px;color:#edf1fa;font-weight:bold;transform-origin:0 9.96px;transform:scale(0.9710,1);">Name</span>
<span class="t" style="left:476.50px;top:303.05px;font-size:11px;color:#edf1fa;font-weight:bold;transform-origin:0 9.96px;transform:scale(0.9377,1);">(CTS)</span>
<span class="t" style="left:541.25px;top:277.05px;font-size:11px;color:#edf1fa;font-weight:bold;transform-origin:0 9.96px;transform:scale(0.9112,1);">Middle</span>
<span class="t" style="left:541.25px;top:290.05px;font-size:11px;color:#edf1fa;font-weight:bold;transform-origin:0 9.96px;transform:scale(0.8874,1);">Initial</span>
<span class="t" style="left:541.25px;top:303.05px;font-size:11px;color:#edf1fa;font-weight:bold;transform-origin:0 9.96px;transform:scale(0.9632,1);">(CTS)</span>
<span class="t" style="left:598.75px;top:290.05px;font-size:11px;color:#edf1fa;font-weight:bold;transform-origin:0 9.96px;transform:scale(0.9584,1);">Penn ID</span>
<span class="t" style="left:603.75px;top:303.05px;font-size:11px;color:#edf1fa;font-weight:bold;transform-origin:0 9.96px;transform:scale(0.9632,1);">(CTS)</span>
<span class="t" style="left:660.50px;top:277.05px;font-size:11px;color:#edf1fa;font-weight:bold;transform-origin:0 9.96px;transform:scale(0.9642,1);">Training</span>
<span class="t" style="left:670.50px;top:290.05px;font-size:11px;color:#edf1fa;font-weight:bold;transform-origin:0 9.96px;transform:scale(0.9031,1);">Title</span>
<span class="t" style="left:667.00px;top:303.05px;font-size:11px;color:#edf1fa;font-weight:bold;transform-origin:0 9.96px;transform:scale(0.9547,1);">(CTS)</span>
<span class="t" style="left:723.00px;top:290.05px;font-size:11px;color:#edf1fa;font-weight:bold;transform-origin:0 9.96px;transform:scale(0.9888,1);">Training</span>
<span class="t" style="left:723.80px;top:303.05px;font-size:11px;color:#edf1fa;font-weight:bold;transform-origin:0 9.96px;transform:scale(0.9495,1);">ID (CTS)</span>
<span class="t" style="left:785.30px;top:291.09px;font-size:10.4px;color:#edf1fa;transform-origin:0 9.41px;transform:scale(0.9577,1);-webkit-text-stroke:.5px #edf1fa;">Assignment</span>
<span class="t" style="left:787.00px;top:303.59px;font-size:10.4px;color:#edf1fa;transform-origin:0 9.41px;transform:scale(0.9135,1);-webkit-text-stroke:.5px #edf1fa;">Date (CTS)</span>
<span class="t" style="left:855.60px;top:291.09px;font-size:10.4px;color:#edf1fa;transform-origin:0 9.41px;transform:scale(0.9234,1);-webkit-text-stroke:.5px #edf1fa;">Completed</span>
<span class="t" style="left:866.00px;top:303.59px;font-size:10.4px;color:#edf1fa;transform-origin:0 9.41px;transform:scale(0.9385,1);-webkit-text-stroke:.5px #edf1fa;">(CTS)</span>
<span class="t" style="left:912.60px;top:290.05px;font-size:11px;color:#edf1fa;transform-origin:0 9.96px;transform:scale(1.0316,1);-webkit-text-stroke:.3px;">Completion</span>
<span class="t" style="left:912.60px;top:303.05px;font-size:11px;color:#edf1fa;transform-origin:0 9.96px;transform:scale(0.9960,1);-webkit-text-stroke:.3px;">Date (CTS)</span>
<div class="a" style="left:980px;top:264px;width:27px;height:53px;overflow:hidden">
<span class="t" style="left:2.20px;top:13.04px;font-size:11px;color:#edf1fa;">Com</span>
<span class="t" style="left:2.20px;top:26.05px;font-size:11px;color:#edf1fa;">Status</span>
<span class="t" style="left:2.20px;top:39.05px;font-size:11px;color:#edf1fa;">(CTS)</span>
</div>
<span class="t" style="left:340.10px;top:319.85px;font-size:11px;color:#1c1c20;">BRACKEN</span>
<span class="t" style="left:476.40px;top:319.85px;font-size:11px;color:#1c1c20;">KELLY</span>
<span class="t" style="left:541.30px;top:319.85px;font-size:11px;color:#1c1c20;">D</span>
<span class="t" style="left:593.32px;top:319.85px;font-size:11px;color:#1c1c20;">10155179</span>
<span class="t" style="left:651.20px;top:319.85px;font-size:11px;color:#1c1c20;transform-origin:0 9.96px;transform:scale(0.9765,1);">AlertDriving:</span>
<span class="t" style="left:715.00px;top:319.85px;font-size:11px;color:#1c1c20;transform-origin:0 9.96px;transform:scale(0.9733,1);">COURSE~U</span>
<span class="t" style="left:787.14px;top:319.85px;font-size:11px;color:#1c1c20;">2/11/2013</span>
<span class="t" style="left:875.02px;top:319.85px;font-size:11px;color:#1c1c20;">N</span>
<span class="t" style="left:340.10px;top:336.36px;font-size:11px;color:#1c1c20;">BRACKEN</span>
<span class="t" style="left:476.40px;top:336.36px;font-size:11px;color:#1c1c20;">KELLY</span>
<span class="t" style="left:541.30px;top:336.36px;font-size:11px;color:#1c1c20;">D</span>
<span class="t" style="left:593.32px;top:336.36px;font-size:11px;color:#1c1c20;">10155179</span>
<span class="t" style="left:651.20px;top:336.36px;font-size:11px;color:#1c1c20;transform-origin:0 9.96px;transform:scale(0.9765,1);">AlertDriving:</span>
<span class="t" style="left:715.00px;top:336.36px;font-size:11px;color:#1c1c20;transform-origin:0 9.96px;transform:scale(0.9733,1);">COURSE~U</span>
<span class="t" style="left:787.14px;top:336.36px;font-size:11px;color:#1c1c20;">2/11/2013</span>
<span class="t" style="left:875.02px;top:336.36px;font-size:11px;color:#1c1c20;">N</span>
<span class="t" style="left:340.10px;top:352.87px;font-size:11px;color:#1c1c20;">BRACKEN</span>
<span class="t" style="left:476.40px;top:352.87px;font-size:11px;color:#1c1c20;">KELLY</span>
<span class="t" style="left:541.30px;top:352.87px;font-size:11px;color:#1c1c20;">D</span>
<span class="t" style="left:593.32px;top:352.87px;font-size:11px;color:#1c1c20;">10155179</span>
<span class="t" style="left:651.20px;top:352.87px;font-size:11px;color:#1c1c20;transform-origin:0 9.96px;transform:scale(0.9765,1);">AlertDriving:</span>
<span class="t" style="left:715.00px;top:352.87px;font-size:11px;color:#1c1c20;transform-origin:0 9.96px;transform:scale(0.9733,1);">COURSE~U</span>
<span class="t" style="left:787.14px;top:352.87px;font-size:11px;color:#1c1c20;">2/11/2013</span>
<span class="t" style="left:875.02px;top:352.87px;font-size:11px;color:#1c1c20;">N</span>
<span class="t" style="left:340.10px;top:369.38px;font-size:11px;color:#1c1c20;">BRACKEN</span>
<span class="t" style="left:476.40px;top:369.38px;font-size:11px;color:#1c1c20;">KELLY</span>
<span class="t" style="left:541.30px;top:369.38px;font-size:11px;color:#1c1c20;">D</span>
<span class="t" style="left:593.32px;top:369.38px;font-size:11px;color:#1c1c20;">10155179</span>
<span class="t" style="left:651.20px;top:369.38px;font-size:11px;color:#1c1c20;transform-origin:0 9.96px;transform:scale(0.9765,1);">AlertDriving:</span>
<span class="t" style="left:715.00px;top:369.38px;font-size:11px;color:#1c1c20;transform-origin:0 9.96px;transform:scale(0.9733,1);">COURSE~U</span>
<span class="t" style="left:787.14px;top:369.38px;font-size:11px;color:#1c1c20;">2/11/2013</span>
<span class="t" style="left:875.02px;top:369.38px;font-size:11px;color:#1c1c20;">N</span>
<span class="t" style="left:340.10px;top:385.89px;font-size:11px;color:#1c1c20;">BRACKEN</span>
<span class="t" style="left:476.40px;top:385.89px;font-size:11px;color:#1c1c20;">KELLY</span>
<span class="t" style="left:541.30px;top:385.89px;font-size:11px;color:#1c1c20;">D</span>
<span class="t" style="left:593.32px;top:385.89px;font-size:11px;color:#1c1c20;">10155179</span>
<span class="t" style="left:651.20px;top:385.89px;font-size:11px;color:#1c1c20;transform-origin:0 9.96px;transform:scale(0.9765,1);">AlertDriving:</span>
<span class="t" style="left:715.00px;top:385.89px;font-size:11px;color:#1c1c20;transform-origin:0 9.96px;transform:scale(0.9733,1);">COURSE~U</span>
<span class="t" style="left:787.14px;top:385.89px;font-size:11px;color:#1c1c20;">2/11/2013</span>
<span class="t" style="left:875.02px;top:385.89px;font-size:11px;color:#1c1c20;">N</span>
<span class="t" style="left:340.10px;top:402.40px;font-size:11px;color:#1c1c20;">BRACKEN</span>
<span class="t" style="left:476.40px;top:402.40px;font-size:11px;color:#1c1c20;">KELLY</span>
<span class="t" style="left:541.30px;top:402.40px;font-size:11px;color:#1c1c20;">D</span>
<span class="t" style="left:593.32px;top:402.40px;font-size:11px;color:#1c1c20;">10155179</span>
<span class="t" style="left:651.20px;top:402.40px;font-size:11px;color:#1c1c20;transform-origin:0 9.96px;transform:scale(0.9765,1);">AlertDriving:</span>
<span class="t" style="left:715.00px;top:402.40px;font-size:11px;color:#1c1c20;transform-origin:0 9.96px;transform:scale(0.9733,1);">COURSE~U</span>
<span class="t" style="left:787.14px;top:402.40px;font-size:11px;color:#1c1c20;">2/11/2013</span>
<span class="t" style="left:875.02px;top:402.40px;font-size:11px;color:#1c1c20;">N</span>
<span class="t" style="left:340.10px;top:418.91px;font-size:11px;color:#1c1c20;">CAWLEY</span>
<span class="t" style="left:476.40px;top:418.91px;font-size:11px;color:#1c1c20;">STEPHEN</span>
<span class="t" style="left:593.32px;top:418.91px;font-size:11px;color:#1c1c20;">29456306</span>
<span class="t" style="left:651.20px;top:418.91px;font-size:11px;color:#1c1c20;transform-origin:0 9.96px;transform:scale(0.9765,1);">AlertDriving:</span>
<span class="t" style="left:715.00px;top:418.91px;font-size:11px;color:#1c1c20;transform-origin:0 9.96px;transform:scale(0.9733,1);">COURSE~U</span>
<span class="t" style="left:789.79px;top:418.91px;font-size:11px;color:#1c1c20;">8/9/2013</span>
<span class="t" style="left:875.33px;top:418.91px;font-size:11px;color:#1c1c20;">Y</span>
<span class="t" style="left:912.60px;top:418.91px;font-size:11px;color:#1c1c20;">9/3/2013</span>
<span class="t" style="left:982.20px;top:418.91px;font-size:11px;color:#1c1c20;transform-origin:0 9.96px;transform:scale(0.9813,1);">Com</span>
<span class="t" style="left:340.10px;top:435.42px;font-size:11px;color:#1c1c20;">CAWLEY</span>
<span class="t" style="left:476.40px;top:435.42px;font-size:11px;color:#1c1c20;">STEPHEN</span>
<span class="t" style="left:593.32px;top:435.42px;font-size:11px;color:#1c1c20;">29456306</span>
<span class="t" style="left:651.20px;top:435.42px;font-size:11px;color:#1c1c20;transform-origin:0 9.96px;transform:scale(0.9765,1);">AlertDriving:</span>
<span class="t" style="left:715.00px;top:435.42px;font-size:11px;color:#1c1c20;transform-origin:0 9.96px;transform:scale(0.9733,1);">COURSE~U</span>
<span class="t" style="left:789.79px;top:435.42px;font-size:11px;color:#1c1c20;">8/9/2013</span>
<span class="t" style="left:875.33px;top:435.42px;font-size:11px;color:#1c1c20;">Y</span>
<span class="t" style="left:912.60px;top:435.42px;font-size:11px;color:#1c1c20;">9/3/2013</span>
<span class="t" style="left:982.20px;top:435.42px;font-size:11px;color:#1c1c20;transform-origin:0 9.96px;transform:scale(0.9813,1);">Com</span>
<span class="t" style="left:340.10px;top:451.93px;font-size:11px;color:#1c1c20;">CAWLEY</span>
<span class="t" style="left:476.40px;top:451.93px;font-size:11px;color:#1c1c20;">STEPHEN</span>
<span class="t" style="left:593.32px;top:451.93px;font-size:11px;color:#1c1c20;">29456306</span>
<span class="t" style="left:651.20px;top:451.93px;font-size:11px;color:#1c1c20;transform-origin:0 9.96px;transform:scale(0.9765,1);">AlertDriving:</span>
<span class="t" style="left:715.00px;top:451.93px;font-size:11px;color:#1c1c20;transform-origin:0 9.96px;transform:scale(0.9733,1);">COURSE~U</span>
<span class="t" style="left:789.79px;top:451.93px;font-size:11px;color:#1c1c20;">8/9/2013</span>
<span class="t" style="left:875.33px;top:451.93px;font-size:11px;color:#1c1c20;">Y</span>
<span class="t" style="left:912.60px;top:451.93px;font-size:11px;color:#1c1c20;">9/5/2013</span>
<span class="t" style="left:982.20px;top:451.93px;font-size:11px;color:#1c1c20;transform-origin:0 9.96px;transform:scale(0.9813,1);">Com</span>
<span class="t" style="left:340.10px;top:468.44px;font-size:11px;color:#1c1c20;">CAWLEY</span>
<span class="t" style="left:476.40px;top:468.44px;font-size:11px;color:#1c1c20;">STEPHEN</span>
<span class="t" style="left:593.32px;top:468.44px;font-size:11px;color:#1c1c20;">29456306</span>
<span class="t" style="left:651.20px;top:468.44px;font-size:11px;color:#1c1c20;transform-origin:0 9.96px;transform:scale(0.9765,1);">AlertDriving:</span>
<span class="t" style="left:715.00px;top:468.44px;font-size:11px;color:#1c1c20;transform-origin:0 9.96px;transform:scale(0.9733,1);">COURSE~U</span>
<span class="t" style="left:789.79px;top:468.44px;font-size:11px;color:#1c1c20;">8/9/2013</span>
<span class="t" style="left:875.33px;top:468.44px;font-size:11px;color:#1c1c20;">Y</span>
<span class="t" style="left:912.60px;top:468.44px;font-size:11px;color:#1c1c20;">9/5/2013</span>
<span class="t" style="left:982.20px;top:468.44px;font-size:11px;color:#1c1c20;transform-origin:0 9.96px;transform:scale(0.9813,1);">Com</span>
<span class="t" style="left:340.10px;top:484.95px;font-size:11px;color:#1c1c20;">CAWLEY</span>
<span class="t" style="left:476.40px;top:484.95px;font-size:11px;color:#1c1c20;">STEPHEN</span>
<span class="t" style="left:593.32px;top:484.95px;font-size:11px;color:#1c1c20;">29456306</span>
<span class="t" style="left:651.20px;top:484.95px;font-size:11px;color:#1c1c20;transform-origin:0 9.96px;transform:scale(0.9765,1);">AlertDriving:</span>
<span class="t" style="left:715.00px;top:484.95px;font-size:11px;color:#1c1c20;transform-origin:0 9.96px;transform:scale(0.9733,1);">COURSE~U</span>
<span class="t" style="left:789.79px;top:484.95px;font-size:11px;color:#1c1c20;">8/9/2013</span>
<span class="t" style="left:875.33px;top:484.95px;font-size:11px;color:#1c1c20;">Y</span>
<span class="t" style="left:912.60px;top:484.95px;font-size:11px;color:#1c1c20;">9/5/2013</span>
<span class="t" style="left:982.20px;top:484.95px;font-size:11px;color:#1c1c20;transform-origin:0 9.96px;transform:scale(0.9813,1);">Com</span>
<span class="t" style="left:340.10px;top:501.46px;font-size:11px;color:#1c1c20;">CAWLEY</span>
<span class="t" style="left:476.40px;top:501.46px;font-size:11px;color:#1c1c20;">STEPHEN</span>
<span class="t" style="left:593.32px;top:501.46px;font-size:11px;color:#1c1c20;">29456306</span>
<span class="t" style="left:651.20px;top:501.46px;font-size:11px;color:#1c1c20;transform-origin:0 9.96px;transform:scale(0.9765,1);">AlertDriving:</span>
<span class="t" style="left:715.00px;top:501.46px;font-size:11px;color:#1c1c20;transform-origin:0 9.96px;transform:scale(0.9733,1);">COURSE~U</span>
<span class="t" style="left:789.79px;top:501.46px;font-size:11px;color:#1c1c20;">8/9/2013</span>
<span class="t" style="left:875.33px;top:501.46px;font-size:11px;color:#1c1c20;">Y</span>
<span class="t" style="left:912.60px;top:501.46px;font-size:11px;color:#1c1c20;">9/5/2013</span>
<span class="t" style="left:982.20px;top:501.46px;font-size:11px;color:#1c1c20;transform-origin:0 9.96px;transform:scale(0.9813,1);">Com</span>
<span class="t" style="left:340.10px;top:517.97px;font-size:11px;color:#1c1c20;">GENTILE</span>
<span class="t" style="left:476.40px;top:517.97px;font-size:11px;color:#1c1c20;">PAUL</span>
<span class="t" style="left:593.32px;top:517.97px;font-size:11px;color:#1c1c20;">72376164</span>
<span class="t" style="left:651.20px;top:517.97px;font-size:11px;color:#1c1c20;transform-origin:0 9.96px;transform:scale(0.9765,1);">AlertDriving:</span>
<span class="t" style="left:715.00px;top:517.97px;font-size:11px;color:#1c1c20;transform-origin:0 9.96px;transform:scale(0.9733,1);">COURSE~U</span>
<span class="t" style="left:875.33px;top:517.97px;font-size:11px;color:#1c1c20;">Y</span>
<span class="t" style="left:912.60px;top:517.97px;font-size:11px;color:#1c1c20;">7/11/2012</span>
<span class="t" style="left:982.20px;top:517.97px;font-size:11px;color:#1c1c20;transform-origin:0 9.96px;transform:scale(0.9813,1);">Com</span>
<span class="t" style="left:340.10px;top:534.48px;font-size:11px;color:#1c1c20;">GENTILE</span>
<span class="t" style="left:476.40px;top:534.48px;font-size:11px;color:#1c1c20;">PAUL</span>
<span class="t" style="left:593.32px;top:534.48px;font-size:11px;color:#1c1c20;">72376164</span>
<span class="t" style="left:651.20px;top:534.48px;font-size:11px;color:#1c1c20;transform-origin:0 9.96px;transform:scale(0.9765,1);">AlertDriving:</span>
<span class="t" style="left:715.00px;top:534.48px;font-size:11px;color:#1c1c20;transform-origin:0 9.96px;transform:scale(0.9733,1);">COURSE~U</span>
<span class="t" style="left:875.33px;top:534.48px;font-size:11px;color:#1c1c20;">Y</span>
<span class="t" style="left:912.60px;top:534.48px;font-size:11px;color:#1c1c20;">7/11/2012</span>
<span class="t" style="left:982.20px;top:534.48px;font-size:11px;color:#1c1c20;transform-origin:0 9.96px;transform:scale(0.9813,1);">Com</span>
<span class="t" style="left:340.10px;top:550.99px;font-size:11px;color:#1c1c20;">GENTILE</span>
<span class="t" style="left:476.40px;top:550.99px;font-size:11px;color:#1c1c20;">PAUL</span>
<span class="t" style="left:593.32px;top:550.99px;font-size:11px;color:#1c1c20;">72376164</span>
<span class="t" style="left:651.20px;top:550.99px;font-size:11px;color:#1c1c20;transform-origin:0 9.96px;transform:scale(0.9765,1);">AlertDriving:</span>
<span class="t" style="left:715.00px;top:550.99px;font-size:11px;color:#1c1c20;transform-origin:0 9.96px;transform:scale(0.9733,1);">COURSE~U</span>
<span class="t" style="left:875.33px;top:550.99px;font-size:11px;color:#1c1c20;">Y</span>
<span class="t" style="left:912.60px;top:550.99px;font-size:11px;color:#1c1c20;">7/11/2012</span>
<span class="t" style="left:982.20px;top:550.99px;font-size:11px;color:#1c1c20;transform-origin:0 9.96px;transform:scale(0.9813,1);">Com</span>
<span class="t" style="left:340.10px;top:567.50px;font-size:11px;color:#1c1c20;">GENTILE</span>
<span class="t" style="left:476.40px;top:567.50px;font-size:11px;color:#1c1c20;">PAUL</span>
<span class="t" style="left:593.32px;top:567.50px;font-size:11px;color:#1c1c20;">72376164</span>
<span class="t" style="left:651.20px;top:567.50px;font-size:11px;color:#1c1c20;transform-origin:0 9.96px;transform:scale(0.9765,1);">AlertDriving:</span>
<span class="t" style="left:715.00px;top:567.50px;font-size:11px;color:#1c1c20;transform-origin:0 9.96px;transform:scale(0.9733,1);">COURSE~U</span>
<span class="t" style="left:875.33px;top:567.50px;font-size:11px;color:#1c1c20;">Y</span>
<span class="t" style="left:912.60px;top:567.50px;font-size:11px;color:#1c1c20;">7/11/2012</span>
<span class="t" style="left:982.20px;top:567.50px;font-size:11px;color:#1c1c20;transform-origin:0 9.96px;transform:scale(0.9813,1);">Com</span>
<span class="t" style="left:340.10px;top:584.00px;font-size:11px;color:#1c1c20;">GENTILE</span>
<span class="t" style="left:476.40px;top:584.00px;font-size:11px;color:#1c1c20;">PAUL</span>
<span class="t" style="left:593.32px;top:584.00px;font-size:11px;color:#1c1c20;">72376164</span>
<span class="t" style="left:651.20px;top:584.00px;font-size:11px;color:#1c1c20;transform-origin:0 9.96px;transform:scale(0.9765,1);">AlertDriving:</span>
<span class="t" style="left:715.00px;top:584.00px;font-size:11px;color:#1c1c20;transform-origin:0 9.96px;transform:scale(0.9733,1);">COURSE~U</span>
<span class="t" style="left:875.33px;top:584.00px;font-size:11px;color:#1c1c20;">Y</span>
<span class="t" style="left:912.60px;top:584.00px;font-size:11px;color:#1c1c20;">7/11/2012</span>
<span class="t" style="left:982.20px;top:584.00px;font-size:11px;color:#1c1c20;transform-origin:0 9.96px;transform:scale(0.9813,1);">Com</span>
<span class="t" style="left:340.10px;top:600.51px;font-size:11px;color:#1c1c20;">GENTILE</span>
<span class="t" style="left:476.40px;top:600.51px;font-size:11px;color:#1c1c20;">PAUL</span>
<span class="t" style="left:593.32px;top:600.51px;font-size:11px;color:#1c1c20;">72376164</span>
<span class="t" style="left:651.20px;top:600.51px;font-size:11px;color:#1c1c20;transform-origin:0 9.96px;transform:scale(0.9765,1);">AlertDriving:</span>
<span class="t" style="left:715.00px;top:600.51px;font-size:11px;color:#1c1c20;transform-origin:0 9.96px;transform:scale(0.9733,1);">COURSE~U</span>
<span class="t" style="left:875.33px;top:600.51px;font-size:11px;color:#1c1c20;">Y</span>
<span class="t" style="left:912.60px;top:600.51px;font-size:11px;color:#1c1c20;">7/11/2012</span>
<span class="t" style="left:982.20px;top:600.51px;font-size:11px;color:#1c1c20;transform-origin:0 9.96px;transform:scale(0.9813,1);">Com</span>
<span class="t" style="left:340.10px;top:617.02px;font-size:11px;color:#1c1c20;">JOHNSON</span>
<span class="t" style="left:476.40px;top:617.02px;font-size:11px;color:#1c1c20;">JAMES</span>
<span class="t" style="left:541.30px;top:617.02px;font-size:11px;color:#1c1c20;">F</span>
<span class="t" style="left:593.32px;top:617.02px;font-size:11px;color:#1c1c20;">10066740</span>
<span class="t" style="left:651.20px;top:617.02px;font-size:11px;color:#1c1c20;transform-origin:0 9.96px;transform:scale(0.9765,1);">AlertDriving:</span>
<span class="t" style="left:715.00px;top:617.02px;font-size:11px;color:#1c1c20;transform-origin:0 9.96px;transform:scale(0.9733,1);">COURSE~U</span>
<span class="t" style="left:789.79px;top:617.02px;font-size:11px;color:#1c1c20;">5/2/2013</span>
<span class="t" style="left:875.33px;top:617.02px;font-size:11px;color:#1c1c20;">Y</span>
<span class="t" style="left:912.60px;top:617.02px;font-size:11px;color:#1c1c20;">5/2/2013</span>
<span class="t" style="left:982.20px;top:617.02px;font-size:11px;color:#1c1c20;transform-origin:0 9.96px;transform:scale(0.9813,1);">Com</span>
<span class="t" style="left:340.10px;top:633.53px;font-size:11px;color:#1c1c20;">LAKATA</span>
<span class="t" style="left:476.40px;top:633.53px;font-size:11px;color:#1c1c20;">ROBERT</span>
<span class="t" style="left:541.30px;top:633.53px;font-size:11px;color:#1c1c20;">F</span>
<span class="t" style="left:593.32px;top:633.53px;font-size:11px;color:#1c1c20;">10014375</span>
<span class="t" style="left:651.20px;top:633.53px;font-size:11px;color:#1c1c20;transform-origin:0 9.96px;transform:scale(0.9765,1);">AlertDriving:</span>
<span class="t" style="left:715.00px;top:633.53px;font-size:11px;color:#1c1c20;transform-origin:0 9.96px;transform:scale(0.9733,1);">COURSE~U</span>
<span class="t" style="left:875.33px;top:633.53px;font-size:11px;color:#1c1c20;">Y</span>
<span class="t" style="left:912.60px;top:633.53px;font-size:11px;color:#1c1c20;">7/5/2012</span>
<span class="t" style="left:982.20px;top:633.53px;font-size:11px;color:#1c1c20;transform-origin:0 9.96px;transform:scale(0.9813,1);">Com</span>
<div class="a" style="left:337px;top:647.0px;width:670px;height:14.5px;background:#ececf1;"></div>
<div class="a" style="left:354px;top:647.5px;width:251.5px;height:13px;border:1px solid #a9aab3;border-radius:2px;background:linear-gradient(#fbfbfc,#e6e6ea 45%,#c4c4ca);"></div>
<svg class="a" style="left:343.00px;top:651.50px" width="4" height="6" viewBox="0 0 4 6"><path d="M4 0v6L0 3z" fill="#444"/></svg>
<svg class="a" style="left:479.00px;top:651.40px" width="1" height="6" viewBox="0 0 1 6"><rect x="0" y="0" width="1" height="1.3" fill="#666"/><rect x="0" y="2" width="1" height="1.3" fill="#666"/><rect x="0" y="4" width="1" height="1.3" fill="#666"/></svg>
<svg class="a" style="left:477.00px;top:651.50px" width="6" height="5" viewBox="0 0 6 5"><path d="M.5 0v5M2.5 0v5M4.5 0v5" stroke="#55565e" stroke-width=".9"/></svg>
<div class="a" style="left:337px;top:661.5px;width:670px;height:1px;background:#9fa0b6;"></div>
<div class="a" style="left:337px;top:662.5px;width:42px;height:20px;background:#ecedf3;"></div>
<svg class="a" style="left:340.00px;top:667.50px" width="8" height="10" viewBox="0 0 8 10"><path d="M7 1v8L2 5zM1 1h1.5v8H1z" fill="#c6c8d6"/></svg>
<svg class="a" style="left:349.50px;top:667.50px" width="8" height="10" viewBox="0 0 8 10"><path d="M6 1v8L1 5z" fill="#c6c8d6"/></svg>
<svg class="a" style="left:358.50px;top:667.50px" width="8" height="10" viewBox="0 0 8 10"><path d="M2 1v8l5-4z" fill="#c6c8d6"/></svg>
<svg class="a" style="left:367.50px;top:667.50px" width="8" height="10" viewBox="0 0 8 10"><path d="M1 1v8l5-4zM6.5 1H8v8H6.5z" fill="#c6c8d6"/></svg>
<div class="a" style="left:506px;top:661.5px;width:222.5px;height:19.5px;background:#a3a5c8;border:1px solid #62638a;border-top:none;border-left:none;border-radius:0 0 3px 0;"></div>
<div class="a" style="left:379px;top:661.5px;width:128.5px;height:22px;background:#e4e5ee;border:1px solid #8586a6;border-top:none;border-radius:0 0 3px 3px;"></div>
<svg class="a" style="left:393.00px;top:666.00px" width="11" height="13" viewBox="0 0 11 13"><path d="M.5 .5h7l3 3v9h-10z" fill="#f4f8fe" stroke="#4f78c0"/><path d="M2.5 4.5h5M2.5 6.5h6M2.5 8.5h6M2.5 10.5h6" stroke="#2f5fb8" stroke-width=".9"/></svg>
<svg class="a" style="left:522.00px;top:665.50px" width="11" height="13" viewBox="0 0 11 13"><path d="M.5 .5h7l3 3v9h-10z" fill="#f4f8fe" stroke="#4f78c0"/><path d="M2.5 4.5h5M2.5 6.5h6M2.5 8.5h6M2.5 10.5h6" stroke="#2f5fb8" stroke-width=".9"/></svg>
<span class="t" style="left:411.75px;top:666.66px;font-size:11.2px;color:#2b4d8e;font-weight:bold;transform-origin:0 10.14px;transform:scale(0.9420,1);">by trainee name</span>
<span class="t" style="left:540.00px;top:666.53px;font-size:10.8px;color:#f1f3fb;font-weight:bold;transform-origin:0 9.77px;transform:scale(0.9907,1);">All Travelers_Specified Timeframe</span>
<div class="a" style="left:14px;top:216px;width:317.5px;height:470px;background:#e4e5ee;border:1px solid #9b9cb5;"></div>
<div class="a" style="left:15px;top:217px;width:315.5px;height:15.5px;background:linear-gradient(#ffffff,#f3f3f7 60%,#e6e6ee);"></div>
<span class="t" style="left:21.25px;top:218.41px;font-size:10.6px;color:#1a1a1e;transform-origin:0 9.59px;transform:scale(0.9208,1);-webkit-text-stroke:.36px;">Document Structure and Filters</span>
<div class="a" style="left:15px;top:232.5px;width:315.5px;height:1px;background:#f6f6fa;"></div>
<div class="a" style="left:15px;top:254.5px;width:315.5px;height:1px;background:#b5b6cb;"></div>
<svg class="a" style="left:24.50px;top:238.00px" width="11" height="11" viewBox="0 0 11 11"><path d="M0 .5h11L7 5v5.5L4 8.5V5z" fill="#c5c6cf" stroke="#a8a9b5" stroke-width=".6"/></svg>
<span class="t" style="left:43.00px;top:238.41px;font-size:10.6px;color:#9697a6;transform-origin:0 9.59px;transform:scale(0.8494,1);-webkit-text-stroke:.36px;">Filter</span>
<div class="a" style="left:68px;top:236px;width:1px;height:16px;background:#b4b5c6;"></div>
<svg class="a" style="left:77.50px;top:237.50px" width="12" height="12" viewBox="0 0 12 12"><path d="M1 1l10 10M11 1L1 11" stroke="#aeafba" stroke-width="1.4"/></svg>
<span class="t" style="left:97.00px;top:238.41px;font-size:10.6px;color:#9697a6;transform-origin:0 9.59px;transform:scale(0.8871,1);-webkit-text-stroke:.36px;">Remove</span>
<div class="a" style="left:138px;top:236px;width:1px;height:16px;background:#b4b5c6;"></div>
<svg class="a" style="left:145.00px;top:236.50px" width="13" height="13" viewBox="0 0 13 13"><rect x=".5" y=".5" width="12" height="12" fill="#f0f0f4" stroke="#b0b1be"/><path d="M3 4h3M8 3v3M3 9l6-4" stroke="#b0b1be"/></svg>
<span class="t" style="left:165.50px;top:238.41px;font-size:10.6px;color:#9697a6;transform-origin:0 9.59px;transform:scale(0.8939,1);-webkit-text-stroke:.36px;">Format</span>
<svg class="a" style="left:21.00px;top:263.50px" width="8" height="8" viewBox="0 0 8 8"><rect x=".5" y=".5" width="7" height="7" fill="#f6f6f9" stroke="#9a9bab"/><path d="M2 4h4" stroke="#333"/></svg>
<svg class="a" style="left:32.50px;top:259.50px" width="15" height="16" viewBox="0 0 15 16"><path d="M4 .5h7l3 3V15H4z" fill="#f5f9ff" stroke="#5b86c8"/><path d="M6 5h6M6 7.5h6M6 10h6" stroke="#9bb8e4"/><circle cx="4.5" cy="11" r="3.7" fill="#e02a3a"/><path d="M0 9l4 3 2-2" stroke="#2f7fd0" stroke-width="1.4" fill="none"/></svg>
<span class="t" style="left:50.75px;top:261.41px;font-size:10.6px;color:#1a1a1e;transform-origin:0 9.59px;transform:scale(0.9217,1);-webkit-text-stroke:.36px;">.User Group Oct 2013 - Combined Query</span>
<svg class="a" style="left:37.30px;top:278.50px" width="8" height="8" viewBox="0 0 8 8"><rect x=".5" y=".5" width="7" height="7" fill="#f6f6f9" stroke="#9a9bab"/><path d="M2 4h4" stroke="#333"/></svg>
<svg class="a" style="left:48.50px;top:274.00px" width="14" height="15" viewBox="0 0 14 15"><rect x="5.5" y=".5" width="8" height="9" fill="#f4f8fd" stroke="#5b86c8"/><path d="M7 3h5M7 5h5" stroke="#8fb0e0"/><path d="M1 5v7a3.5 1.5 0 0 0 7 0V5z" fill="#f0c020" stroke="#b88a08" stroke-width=".7"/><ellipse cx="4.5" cy="5" rx="3.5" ry="1.5" fill="#f8dc60" stroke="#b88a08" stroke-width=".7"/></svg>
<span class="t" style="left:66.75px;top:276.41px;font-size:10.6px;color:#1a1a1e;transform-origin:0 9.59px;transform:scale(0.8717,1);-webkit-text-stroke:.36px;">LMS</span>
<div class="a" style="left:67.5px;top:290px;width:243.5px;height:99.5px;background:#f0f0f3;border:1px solid #9192a8;"></div>
<div class="a" style="left:116px;top:297px;width:1px;height:86.5px;background:#a9aabd;"></div>
<svg class="a" style="left:70.50px;top:334.50px" width="11" height="11" viewBox="0 0 11 11"><path d="M0 .5h11L7 5v5.5L4 8.5V5z" fill="#f2c81e" stroke="#c79c0a" stroke-width=".6"/></svg>
<span class="t" style="left:96.00px;top:334.59px;font-size:11.5px;color:#1a1a1e;-webkit-text-stroke:.36px;">A</span>
<span class="t" style="left:103.30px;top:337.22px;font-size:8.6px;color:#1a1a1e;transform-origin:0 7.78px;transform:scale(0.9016,1);-webkit-text-stroke:.36px;">ND</span>
<span class="t" style="left:120.00px;top:300.41px;font-size:10.6px;color:#1a1a1e;transform-origin:0 9.59px;transform:scale(0.9159,1);-webkit-text-stroke:.36px;">Item ID (CTS) Matches pattern prompt</span>
<span class="t" style="left:120.00px;top:313.41px;font-size:10.6px;color:#1a1a1e;transform-origin:0 9.59px;transform:scale(0.8861,1);-webkit-text-stroke:.36px;">(&#x27;Enter Item ID (eg:</span>
<span class="t" style="left:120.00px;top:326.41px;font-size:10.6px;color:#1a1a1e;transform-origin:0 9.59px;transform:scale(0.8958,1);-webkit-text-stroke:.36px;">UP.87022.ITEM.DRV%):&#x27;)</span>
<span class="t" style="left:120.00px;top:342.41px;font-size:10.6px;color:#1a1a1e;transform-origin:0 9.59px;transform:scale(0.9170,1);-webkit-text-stroke:.36px;">Home Dept Org (EG) In List prompt(&#x27;List</span>
<span class="t" style="left:120.00px;top:355.41px;font-size:10.6px;color:#1a1a1e;transform-origin:0 9.59px;transform:scale(0.9110,1);-webkit-text-stroke:.36px;">Home-Posted TX ORG(s):&#x27;)</span>
<span class="t" style="left:120.00px;top:371.41px;font-size:10.6px;color:#1a1a1e;transform-origin:0 9.59px;transform:scale(0.9033,1);-webkit-text-stroke:.36px;">Employment Status (EG) Not Equal to T</span>
<svg class="a" style="left:37.30px;top:395.50px" width="8" height="8" viewBox="0 0 8 8"><rect x=".5" y=".5" width="7" height="7" fill="#f6f6f9" stroke="#9a9bab"/><path d="M2 4h4" stroke="#333"/></svg>
<svg class="a" style="left:48.50px;top:391.00px" width="14" height="15" viewBox="0 0 14 15"><rect x="5.5" y=".5" width="8" height="9" fill="#f4f8fd" stroke="#5b86c8"/><path d="M7 3h5M7 5h5" stroke="#8fb0e0"/><path d="M1 5v7a3.5 1.5 0 0 0 7 0V5z" fill="#f0c020" stroke="#b88a08" stroke-width=".7"/><ellipse cx="4.5" cy="5" rx="3.5" ry="1.5" fill="#f8dc60" stroke="#b88a08" stroke-width=".7"/></svg>
<span class="t" style="left:66.75px;top:393.41px;font-size:10.6px;color:#1a1a1e;transform-origin:0 9.59px;transform:scale(0.9353,1);-webkit-text-stroke:.36px;">Query 2</span>
<div class="a" style="left:67.5px;top:407px;width:243.5px;height:154px;background:#f0f0f3;border:1px solid #9192a8;"></div>
<div class="a" style="left:116px;top:414px;width:1px;height:141px;background:#a9aabd;"></div>
<svg class="a" style="left:70.50px;top:477.50px" width="11" height="11" viewBox="0 0 11 11"><path d="M0 .5h11L7 5v5.5L4 8.5V5z" fill="#f2c81e" stroke="#c79c0a" stroke-width=".6"/></svg>
<span class="t" style="left:96.00px;top:477.59px;font-size:11.5px;color:#1a1a1e;-webkit-text-stroke:.36px;">A</span>
<span class="t" style="left:103.30px;top:480.22px;font-size:8.6px;color:#1a1a1e;transform-origin:0 7.78px;transform:scale(0.9016,1);-webkit-text-stroke:.36px;">ND</span>
<span class="t" style="left:120.00px;top:416.41px;font-size:10.6px;color:#1a1a1e;transform-origin:0 9.59px;transform:scale(0.9351,1);-webkit-text-stroke:.36px;">Transaction Date (GLDET) Between</span>
<span class="t" style="left:120.00px;top:429.41px;font-size:10.6px;color:#1a1a1e;transform-origin:0 9.59px;transform:scale(0.9137,1);-webkit-text-stroke:.36px;">prompt(&#x27;Enter Transaction Date (GLDET)</span>
<span class="t" style="left:120.00px;top:442.41px;font-size:10.6px;color:#1a1a1e;transform-origin:0 9.59px;transform:scale(0.9421,1);-webkit-text-stroke:.36px;">(Start):&#x27;) And prompt(&#x27;Enter Transaction</span>
<span class="t" style="left:120.00px;top:455.41px;font-size:10.6px;color:#1a1a1e;transform-origin:0 9.59px;transform:scale(0.8971,1);-webkit-text-stroke:.36px;">Date (GLDET)(End):&#x27;)</span>
<span class="t" style="left:120.00px;top:471.41px;font-size:10.6px;color:#1a1a1e;transform-origin:0 9.59px;transform:scale(0.9114,1);-webkit-text-stroke:.36px;">SUM Actual Amount (GLDET) Not Equal to</span>
<span class="t" style="left:120.00px;top:484.41px;font-size:10.6px;color:#1a1a1e;transform-origin:0 9.59px;transform:scale(1.0159,1);-webkit-text-stroke:.36px;">0</span>
<span class="t" style="left:120.00px;top:500.41px;font-size:10.6px;color:#1a1a1e;transform-origin:0 9.59px;transform:scale(0.9134,1);-webkit-text-stroke:.36px;">Coa Org (GLDET) In List prompt(&#x27;List</span>
<span class="t" style="left:120.00px;top:513.41px;font-size:10.6px;color:#1a1a1e;transform-origin:0 9.59px;transform:scale(0.9071,1);-webkit-text-stroke:.36px;">Home-Posted TX ORG(s):&#x27;)</span>
<span class="t" style="left:120.00px;top:529.91px;font-size:10.6px;color:#1a1a1e;transform-origin:0 9.59px;transform:scale(0.9322,1);-webkit-text-stroke:.36px;">Coa Object (GLDET) Between 5200 And</span>
<span class="t" style="left:120.00px;top:542.91px;font-size:10.6px;color:#1a1a1e;transform-origin:0 9.59px;transform:scale(0.9119,1);-webkit-text-stroke:.36px;">5205</span>
<svg class="a" style="left:37.30px;top:566.50px" width="8" height="8" viewBox="0 0 8 8"><rect x=".5" y=".5" width="7" height="7" fill="#f6f6f9" stroke="#9a9bab"/><path d="M2 4h4" stroke="#333"/></svg>
<svg class="a" style="left:51.00px;top:563.50px" width="10" height="13" viewBox="0 0 10 13"><path d="M.5 .5h6.5l2.5 2.5v9.5h-9z" fill="#eaf2fd" stroke="#5b86c8"/><path d="M2 4.5h5M2 6.5h5M2 8.5h5M2 10.5h5" stroke="#3f6fc0" stroke-width=".8"/></svg>
<span class="t" style="left:66.25px;top:564.41px;font-size:10.6px;color:#1a1a1e;transform-origin:0 9.59px;transform:scale(0.9280,1);-webkit-text-stroke:.36px;">by trainee name</span>
<div class="a" style="left:67px;top:579.5px;width:11px;height:11px;background:#fbfbfd;border:1px solid #7f809a;"></div>
<span class="t" style="left:69.20px;top:579.69px;font-size:10px;color:#333;font-family:'Liberation Serif',serif;">H</span>
<span class="t" style="left:83.25px;top:578.91px;font-size:10.6px;color:#1a1a1e;transform-origin:0 9.59px;transform:scale(0.8969,1);-webkit-text-stroke:.36px;">Page Header</span>
<svg class="a" style="left:53.80px;top:595.50px" width="8" height="8" viewBox="0 0 8 8"><rect x=".5" y=".5" width="7" height="7" fill="#f6f6f9" stroke="#9a9bab"/><path d="M2 4h4" stroke="#333"/></svg>
<div class="a" style="left:67px;top:594.0px;width:11px;height:11px;background:#fbfbfd;border:1px solid #7f809a;"></div>
<span class="t" style="left:69.20px;top:594.19px;font-size:10px;color:#333;font-family:'Liberation Serif',serif;">B</span>
<span class="t" style="left:83.25px;top:593.41px;font-size:10.6px;color:#1a1a1e;transform-origin:0 9.59px;transform:scale(0.8921,1);-webkit-text-stroke:.36px;">Page Body</span>
<div class="a" style="left:83.25px;top:609.4px;width:12px;height:9px;background:#fafafd;border:1px solid #8788a0;"></div>
<span class="t" style="left:99.50px;top:607.91px;font-size:10.6px;color:#1a1a1e;transform-origin:0 9.59px;transform:scale(0.8932,1);-webkit-text-stroke:.36px;">Cell: =DocumentName()</span>
<div class="a" style="left:83.25px;top:623.9px;width:12px;height:9px;background:#fafafd;border:1px solid #8788a0;"></div>
<span class="t" style="left:99.50px;top:622.41px;font-size:10.6px;color:#1a1a1e;transform-origin:0 9.59px;transform:scale(0.9345,1);-webkit-text-stroke:.36px;">Cell: by Trainee as of</span>
<div class="a" style="left:83.25px;top:638.4px;width:12px;height:9px;background:#fafafd;border:1px solid #8788a0;"></div>
<span class="t" style="left:99.50px;top:636.91px;font-size:10.6px;color:#1a1a1e;transform-origin:0 9.59px;transform:scale(0.9155,1);-webkit-text-stroke:.36px;">Cell: Refresh Date</span>
<div class="a" style="left:80px;top:650px;width:230px;height:12.5px;overflow:hidden"><div class="a" style="left:3.2px;top:4.6px;width:12px;height:11px;background:#fafafd;border:1px solid #8aa3d4;border-top:3px solid #5f82c8"></div></div>
<span class="t" style="left:99.50px;top:651.41px;font-size:10.6px;color:#1a1a1e;transform-origin:0 9.59px;transform:scale(0.9378,1);-webkit-text-stroke:.36px;">Vertical Table: Block1</span>
<div class="a" style="left:316px;top:256px;width:14px;height:406px;background:#ededf1;"></div>
<div class="a" style="left:316px;top:274px;width:13.5px;height:337px;border:1px solid #b4b5be;border-radius:2px;background:linear-gradient(90deg,#f7f7f9,#e3e3e7 45%,#c6c6cc);"></div>
<svg class="a" style="left:320.00px;top:262.50px" width="6" height="4" viewBox="0 0 6 4"><path d="M0 4h6L3 0z" fill="#666a78"/></svg>
<svg class="a" style="left:320.00px;top:651.50px" width="6" height="4" viewBox="0 0 6 4"><path d="M0 0h6L3 4z" fill="#666a78"/></svg>
<svg class="a" style="left:320.10px;top:439.90px" width="6" height="8.399999999999999" viewBox="0 0 6 8.399999999999999"><rect x="0" y="0.0" width="6" height="1.3" fill="#6d6e80"/><rect x="0" y="2.8" width="6" height="1.3" fill="#6d6e80"/><rect x="0" y="5.6" width="6" height="1.3" fill="#6d6e80"/></svg>
<div class="a" style="left:15px;top:662.5px;width:315.5px;height:22.5px;background:#e4e5ee;border-top:1px solid #9b9cb5;"></div>
<div class="a" style="left:104.5px;top:664px;width:18px;height:20.5px;background:#c3c8dc;"></div>
<svg class="a" style="left:19.50px;top:667.00px" width="14" height="14" viewBox="0 0 14 14"><rect x=".5" y=".5" width="10" height="11" fill="#eef3fc" stroke="#4d6fb8"/><path d="M2 3h3M2 6h6" stroke="#4d6fb8"/><circle cx="9.5" cy="9.5" r="3.5" fill="#dfe8f8" stroke="#6f8fd0"/></svg>
<svg class="a" style="left:42.00px;top:666.50px" width="15" height="15" viewBox="0 0 15 15"><rect x=".5" y=".5" width="7" height="9" fill="#eef3fc" stroke="#4d6fb8"/><path d="M6 6v7a4 1.5 0 0 0 8 0V6z" fill="#f0c020" stroke="#b88a08" stroke-width=".7"/><ellipse cx="10" cy="6" rx="4" ry="1.5" fill="#f8dc60" stroke="#b88a08" stroke-width=".7"/></svg>
<svg class="a" style="left:63.00px;top:668.00px" width="15" height="13" viewBox="0 0 15 13"><rect x=".5" y=".5" width="12" height="9" fill="#3f5fa8" stroke="#2a4080"/><rect x="2" y="2" width="4" height="6" fill="#e8ecf8"/><rect x="8" y="4" width="2.5" height="8" fill="#e8a020"/><rect x="11.5" y="6" width="2.5" height="6" fill="#d06a18"/></svg>
<svg class="a" style="left:86.00px;top:667.50px" width="13" height="12" viewBox="0 0 13 12"><rect x="0" y="6" width="10" height="4" fill="#f0a020"/><rect x="3" y="1" width="9" height="5" fill="#3aa040"/><rect x="5" y="0" width="3" height="2" fill="#2a8030"/></svg>
<svg class="a" style="left:107.50px;top:667.50px" width="13" height="14" viewBox="0 0 13 14"><path d="M.5 .5h6l2 2v8h-8z" fill="#f4f7fd" stroke="#6f8fc8"/><path d="M2 4h4M2 6h4" stroke="#8fa8d8"/><path d="M5 7h7L9.5 10v3.5L7.5 12V10z" fill="#f2c81e" stroke="#b88a08" stroke-width=".6"/></svg>
<svg class="a" style="left:131.00px;top:667.50px" width="11" height="14" viewBox="0 0 11 14"><path d="M.5 .5h7l3 3v10h-10z" fill="#f4f7fd" stroke="#7f9fd0"/><path d="M2 5h6M2 7.5h6M2 10h6" stroke="#7f9fd0"/><rect x="3" y="6.5" width="4" height="5" fill="#dfe8f8" stroke="#5f7fc0" stroke-width=".7"/></svg>
<svg class="a" style="left:150.00px;top:669.00px" width="15" height="11" viewBox="0 0 15 11"><path d="M0 2l3 3-3 3z" fill="#777888"/><rect x="5.5" y=".5" width="9" height="10" fill="#f4f4f8" stroke="#777888"/><path d="M8 2v7" stroke="#555"/></svg>
<svg class="a" style="left:174.00px;top:667.00px" width="14" height="13" viewBox="0 0 14 13"><rect x=".5" y=".5" width="8" height="7" fill="#eef3fc" stroke="#5f7fc0"/><rect x="5.5" y="4.5" width="8" height="8" fill="#f8f9fd" stroke="#5f7fc0"/><path d="M2 3h3" stroke="#2a4080" stroke-width="1.5"/></svg>
<svg class="a" style="left:194.20px;top:667.40px" width="14.6" height="13.2" viewBox="0 0 14.6 13.2"><path d="M.5 13V7.5L2.6 1.5h2.8l1 3h2l1-3h2.8l2 6V13H8.5V9h-2.4v4z" fill="#3b55ae"/><rect x="2" y="9.3" width="2.8" height="2.8" fill="#e6ebfb"/><rect x="9.8" y="9.3" width="2.8" height="2.8" fill="#e6ebfb"/><path d="M3 4.5h2M9.6 4.5h2" stroke="#c5cff0" stroke-width="1.2"/></svg>
</div>
</body>
</html>
